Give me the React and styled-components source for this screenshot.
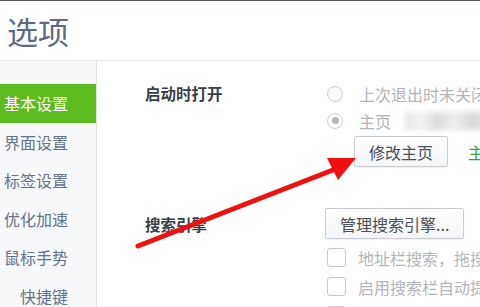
import React from 'react';
import styled, { createGlobalStyle } from 'styled-components';

const Global = createGlobalStyle`
  html, body {
    margin: 0;
    padding: 0;
    background: #ffffff;
  }
  body {
    font-family: "Noto Sans CJK SC", "Noto Sans", sans-serif;
  }
`;

const Window = styled.div`
  position: relative;
  width: 480px;
  height: 307px;
  overflow: hidden;
  border-top: 1px solid #555a60;
  box-sizing: border-box;
  display: flex;
  flex-direction: column;
  white-space: nowrap;
`;

const Header = styled.div`
  height: 59px;
  flex-shrink: 0;
  display: flex;
  align-items: center;
  padding-left: 7px;
  border-bottom: 1px solid #e8eaed;
  font-size: 31px;
  color: #5b6a7e;
  letter-spacing: 0;
`;

const Body = styled.div`
  flex: 1;
  display: flex;
  min-height: 0;
`;

const Sidebar = styled.div`
  width: 96px;
  flex-shrink: 0;
  background: #f7f8fa;
  border-right: 1px solid #e1e3e6;
  padding-top: 23px;
  display: flex;
  flex-direction: column;
`;

const NavItem = styled.div`
  height: 38.5px;
  line-height: 38.5px;
  text-align: right;
  padding-right: 28px;
  font-size: 16px;
  color: ${p => (p.$active ? '#ffffff' : '#65738a')};
  background: ${p => (p.$active ? '#5cbb1d' : 'transparent')};
`;

const Main = styled.div`
  flex: 1;
  padding: 19px 0 0 48px;
  display: flex;
  flex-direction: column;
`;

const Section = styled.div`
  display: grid;
  grid-template-columns: 180px 1fr;
  margin-top: ${p => p.$gap || 0}px;
`;

const Label = styled.div`
  font-size: 15.5px;
  font-weight: bold;
  color: #3a3f47;
  line-height: ${p => p.$lh || 26}px;
`;

const Options = styled.div`
  display: flex;
  flex-direction: column;
  align-items: flex-start;
`;

const OptionRow = styled.div`
  display: flex;
  align-items: center;
  height: ${p => p.$h || 27}px;
  font-size: 16px;
  color: #b2b5ba;
`;

const Radio = styled.span`
  width: 14px;
  height: 14px;
  border-radius: 50%;
  border: 1px solid #cfd1d4;
  background: #fbfbfb;
  margin: 0 16px 0 2px;
  display: inline-flex;
  align-items: center;
  justify-content: center;
  flex-shrink: 0;

  &::after {
    content: '';
    width: 7px;
    height: 7px;
    border-radius: 50%;
    background: ${p => (p.$checked ? '#b4b8bc' : 'transparent')};
  }
`;

const Check = styled.span`
  width: 17px;
  height: 17px;
  border: 1px solid #c4c7cb;
  border-radius: 3px;
  background: #ffffff;
  margin: 0 12px 0 2px;
  flex-shrink: 0;
`;

const Blurred = styled.span`
  display: inline-block;
  width: 90px;
  height: 18px;
  margin-left: 14px;
  background: linear-gradient(90deg, #e6e6e6 0%, #f2f2f2 18%, #dcdcdc 35%, #eeeeee 55%, #d9d9d9 75%, #ececec 100%);
  filter: blur(2.5px);
`;

const ButtonRow = styled.div`
  display: flex;
  align-items: center;
  margin-top: ${p => p.$mt || 0}px;
`;

const Button = styled.div`
  height: 29px;
  padding: 0 ${p => p.$px || 14}px;
  border: 1px solid #c9ccd0;
  border-radius: 2px;
  background: linear-gradient(#ffffff, #f3f4f5);
  box-shadow: 0 1px 1px rgba(0, 0, 0, 0.06);
  font-size: 16px;
  color: #4a4f58;
  display: flex;
  align-items: center;
  margin-left: ${p => p.$ml || 0}px;
`;

const GreenText = styled.span`
  margin-left: 20px;
  font-size: 16px;
  color: #3aa148;
`;

const Arrow = styled.svg`
  position: absolute;
  left: 0;
  top: 0;
  pointer-events: none;
`;

const navItems = ['基本设置', '界面设置', '标签设置', '优化加速', '鼠标手势', '快捷键'];

export default function App() {
  return (
    <Window>
      <Global />
      <Header>选项</Header>
      <Body>
        <Sidebar>
          {navItems.map((t, i) => (
            <NavItem key={t} $active={i === 0}>{t}</NavItem>
          ))}
        </Sidebar>
        <Main>
          <Section>
            <Label>启动时打开</Label>
            <Options>
              <OptionRow>
                <Radio />上次退出时未关闭的页面
              </OptionRow>
              <OptionRow>
                <Radio $checked />主页<Blurred />
              </OptionRow>
              <ButtonRow $mt={2}>
                <Button $ml={29} $px={14}>修改主页</Button>
                <GreenText>主页设置为</GreenText>
              </ButtonRow>
            </Options>
          </Section>
          <Section $gap={41}>
            <Label $lh={33}>搜索引擎</Label>
            <Options>
              <Button $px={14}>管理搜索引擎...</Button>
              <OptionRow $h={29} style={{ marginTop: 4 }}>
                <Check />地址栏搜索，拖搜索
              </OptionRow>
              <OptionRow $h={29}>
                <Check />启用搜索栏自动提示
              </OptionRow>
              <OptionRow $h={29}>
                <Check />显示
              </OptionRow>
            </Options>
          </Section>
        </Main>
      </Body>
      <Arrow width="480" height="307" viewBox="0 0 480 307">
        <line x1="138" y1="245" x2="338" y2="167" stroke="#f01010" strokeWidth="5" strokeLinecap="round" />
        <polygon points="356,157 327,157 338,179" fill="#f01010" />
      </Arrow>
    </Window>
  );
}
